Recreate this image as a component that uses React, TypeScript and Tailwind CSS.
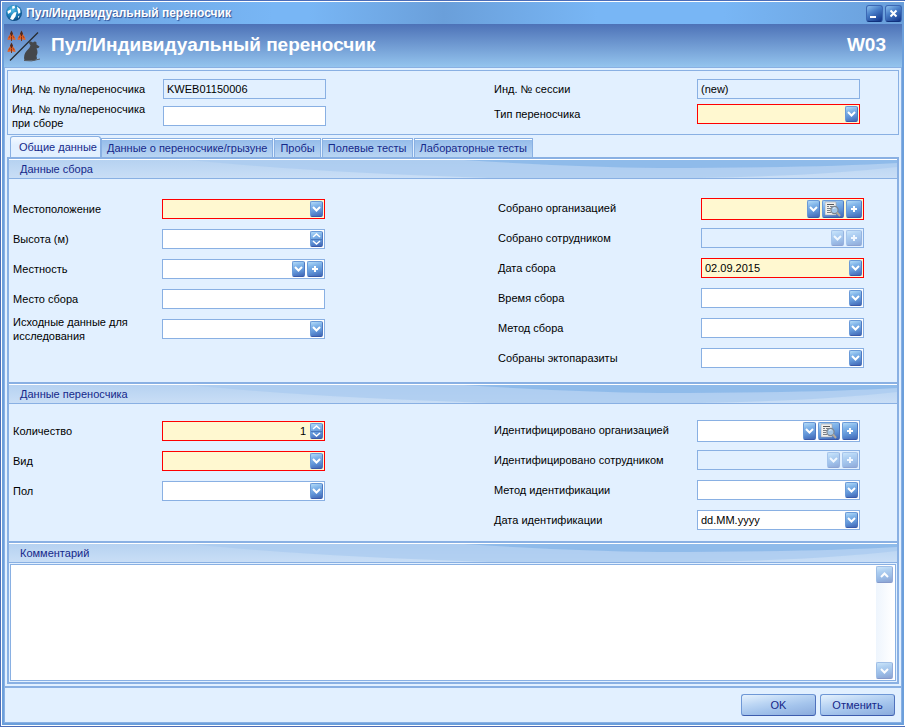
import { useId, useState, type ReactNode } from "react";
import clsx from "clsx";

const GLOSS =
  "rounded-[2px] border border-[#6a9ad8] border-b-[#3a5aa9] border-r-[#4f78c0] bg-[linear-gradient(165deg,#b4dbf8_0%,#80b4e9_30%,#5f93d7_65%,#4166b4_100%)] text-white";

function Chevron({ up = false }: { up?: boolean }) {
  return (
    <svg width="9" height="6" viewBox="0 0 9 6" fill="none" stroke="currentColor" strokeWidth="2" aria-hidden="true">
      <path d={up ? "M1 5 4.500 1.500 8 5" : "M1 1 4.500 4.500 8 1"} />
    </svg>
  );
}

function Plus() {
  return (
    <svg width="6" height="6" viewBox="0 0 6 6" fill="currentColor" aria-hidden="true">
      <path d="M2 0h2v2h2v2H4v2H2V4H0V2h2z" />
    </svg>
  );
}

function LookupIcon() {
  return (
    <svg className="shrink-0" width="16" height="16" viewBox="0 0 16 16" aria-hidden="true">
      <path d="M0 1h11v13H0z" fill="#f1f1ee" stroke="#9aa0a8" strokeWidth=".6" />
      <path d="M2 3.500h7" stroke="#55585c" strokeWidth="1" />
      <path d="M2 5.500h2M2 7.500h4M2 9.500h3M2 11.500h4M5 5.500h4" stroke="#7b7f84" strokeWidth="1" />
      <circle cx="9.500" cy="9" r="3.600" fill="#a3c6e6" stroke="#7c858f" strokeWidth="1.200" />
      <path d="M8 7.500Q9 6.500 10.500 7" stroke="#eef6fd" strokeWidth="1" fill="none" />
      <path d="M12 11.500 15 15" stroke="#b3aa9b" strokeWidth="2" />
    </svg>
  );
}

function ArrowBox() {
  return (
    <span className={clsx(GLOSS, "pointer-events-none flex w-[13px] items-center justify-center")}>
      <Chevron />
    </span>
  );
}

type FieldButtonProps = { label: string; width: string; disabled?: boolean; children: ReactNode };

function FieldButton({ label, width, disabled, children }: FieldButtonProps) {
  return (
    <button
      type="button"
      aria-label={label}
      disabled={disabled}
      className={clsx(GLOSS, width, "flex items-center justify-center disabled:opacity-50")}
    >
      {children}
    </button>
  );
}

type FieldProps = {
  label: string;
  kind?: "text" | "select" | "date" | "spin";
  value?: string;
  required?: boolean;
  disabled?: boolean;
  readOnly?: boolean;
  lookup?: boolean;
  add?: boolean;
  labelWidth: string;
};

function Field({ label, kind = "text", value = "", required, disabled, readOnly, lookup, add, labelWidth }: FieldProps) {
  const id = useId();
  const [current, setCurrent] = useState(value);
  const control = clsx(
    "h-full w-full min-w-0 flex-1 appearance-none bg-transparent px-[2px] text-[11px] text-black outline-none",
    kind === "spin" && "text-right",
  );
  return (
    <div className="flex h-full min-w-0">
      <label htmlFor={id} className={clsx(labelWidth, "flex h-5 shrink-0 items-center self-center pr-2 leading-[14px] group-data-[align=start]:self-start")}>
        {label}
      </label>
      <div
        className={clsx(
          "flex min-w-0 flex-1 gap-[2px] self-center border p-px group-data-[align=start]:self-start",
          lookup ? "h-[22px]" : "h-5",
          required ? "border-[#ff0000] bg-[#fff8d0]" : "border-[#89b0e3]",
          !required && !disabled && !readOnly && "bg-white",
        )}
      >
        {kind === "select" ? (
          <>
            <select id={id} disabled={disabled} className={control} defaultValue="">
              <option value=""></option>
            </select>
            {disabled ? <span className="flex opacity-50"><ArrowBox /></span> : <ArrowBox />}
          </>
        ) : (
          <input
            id={id}
            type="text"
            readOnly={readOnly}
            value={current}
            onChange={(e) => setCurrent(e.target.value)}
            className={control}
          />
        )}
        {kind === "date" && (
          <FieldButton label="Открыть календарь" width="w-[13px]">
            <Chevron />
          </FieldButton>
        )}
        {kind === "spin" && (
          <div className={clsx(GLOSS, "flex w-[13px] flex-col")}>
            <button type="button" aria-label="Увеличить" className="flex flex-1 items-center justify-center border-b border-[#4a78bd]">
              <svg width="9" height="5" viewBox="0 0 9 5" fill="none" stroke="currentColor" strokeWidth="1.500"><path d="M1 4 4.500 1 8 4" /></svg>
            </button>
            <button type="button" aria-label="Уменьшить" className="flex flex-1 items-center justify-center">
              <svg width="9" height="5" viewBox="0 0 9 5" fill="none" stroke="currentColor" strokeWidth="1.500"><path d="M1 1 4.500 4 8 1" /></svg>
            </button>
          </div>
        )}
        {lookup && (
          <FieldButton label="Найти" width="w-[22px]">
            <LookupIcon />
          </FieldButton>
        )}
        {add && (
          <FieldButton label="Добавить" width="w-4" disabled={disabled}>
            <Plus />
          </FieldButton>
        )}
      </div>
    </div>
  );
}

function Column({ align, className, children }: { align: "center" | "start"; className: string; children: ReactNode }) {
  return (
    <div data-align={align} className={clsx("group grid content-start", className)}>
      {children}
    </div>
  );
}

function SectionHeader({ children }: { children: ReactNode }) {
  return (
    <div className="relative h-[20px] shrink-0 border-b border-t border-b-[#89b0e3] border-t-white bg-[linear-gradient(#b6d2f1,#c9def6)]">
      <svg className="absolute inset-0 h-full w-full" viewBox="0 0 888 18" preserveAspectRatio="none" aria-hidden="true">
        <path d="M180 0Q300 12 480 18H690Q810 16 888 7V0Z" fill="#a9caef" opacity=".7" />
        <path d="M455 0Q560 7 650 8Q800 8 888 3V0Z" fill="#8ab7e9" opacity=".85" />
      </svg>
      <h2 className="relative pl-[11px] leading-[18px] text-[#15288a]">{children}</h2>
    </div>
  );
}

function GlobeIcon() {
  return (
    <svg width="18" height="18" viewBox="0 0 18 18" aria-hidden="true">
      <defs>
        <radialGradient id="globe" cx=".4" cy=".3" r=".75">
          <stop offset="0" stopColor="#56bde6" />
          <stop offset=".6" stopColor="#1878b4" />
          <stop offset="1" stopColor="#0b4077" />
        </radialGradient>
      </defs>
      <circle cx="9" cy="9" r="8" fill="url(#globe)" />
      <path d="M7 2.500 9.500 1.500 10 4 7.500 5zM12 2.500 15 5 15.500 8.500 13.500 10 12.500 6zM2.500 7 6 5.500 6 8 3 10zM9 8.500 11.500 8 10.500 12.500 8 16 5 15 6.500 11.500zM13 12.500 14.500 11.500 13.500 14.500z" fill="#fff" />
    </svg>
  );
}

function Fly({ x, y }: { x: number; y: number }) {
  return (
    <g transform={`translate(${x} ${y})`}>
      <path d="M4 2.500Q0 6 0 9.500L3 9 4 7.500 5 9 8 9.500Q8 6 4 2.500Z" fill="#e2632a" />
      <path d="M4 0 5.500 3 4.500 5.500H3.500L2.500 3Z" fill="#55281a" />
      <path d="M3.500 6h1v4.500h-1z" fill="#7c3518" />
      <path d="M1.500 7.500 2.500 5.500M6.500 7.500 5.500 5.500" stroke="#8c3a18" strokeWidth=".7" />
    </g>
  );
}

function VectorIcon() {
  return (
    <svg width="34" height="34" viewBox="0 0 34 34" aria-hidden="true">
      <Fly x={0.5} y={1.5} />
      <Fly x={10.5} y={1.5} />
      <Fly x={0.5} y={13.5} />
      <path d="M3 31.500 31 3.500" stroke="#262a30" strokeWidth="1.200" />
      <path d="M22 14Q22 12 24 12.500L26 13.500Q28 11.500 29.500 13.500L29.500 15.500L32.500 17.500Q32.500 19 29.500 19.500Q31.500 23 29.500 27L30 29.500L28 31.500H17.500Q16 26 19.500 22Q23 19 23.500 16.500Z" fill="#45474b" />
      <path d="M17 31.500Q24 33 33 30" stroke="#585c62" strokeWidth="1" fill="none" />
    </svg>
  );
}

const TABS = ["Общие данные", "Данные о переносчике/грызуне", "Пробы", "Полевые тесты", "Лабораторные тесты"];

const CAPTION_BUTTON =
  "flex h-[17px] w-[17px] items-center justify-center rounded-[3px] border border-[#3d68b4] border-b-[#10307c] bg-[linear-gradient(150deg,#8cc0ee_0%,#4a80ca_40%,#0f3287_100%)] text-white";

export default function App() {
  const [tab, setTab] = useState(0);
  return (
    <div className="flex min-h-screen flex-col border-y border-l border-[#4b6db8] font-['Liberation_Sans',Arial,sans-serif] text-[11px] text-black">
      <div className="flex flex-1 flex-col border border-white bg-[#6c9fdb]">
        <header className="flex h-[22px] items-center bg-[linear-gradient(90deg,#6a9fda_0%,#78b6f5_30%,#78b6f5_34%,#6a9fda_49%,#78b6f5_66%,#78b6f5_80%,#6a9fda_100%)] pl-[3px]">
          <GlobeIcon />
          <span className="ml-[3px] flex-1 text-[12px] font-bold text-white [text-shadow:1px_1px_1px_#2d4f96]">
            Пул/Индивидуальный переносчик
          </span>
          <div className="flex gap-[2px] pr-[2px]">
            <button type="button" aria-label="Свернуть" className={CAPTION_BUTTON}>
              <svg width="15" height="15" viewBox="0 0 15 15" aria-hidden="true"><path d="M3 10h6v2H3z" fill="currentColor" /></svg>
            </button>
            <button type="button" aria-label="Закрыть" className={CAPTION_BUTTON}>
              <svg width="15" height="15" viewBox="0 0 15 15" aria-hidden="true"><path d="M4.500 4.500 10.500 10.500M10.500 4.500 4.500 10.500" stroke="currentColor" strokeWidth="2" /></svg>
            </button>
          </div>
        </header>

        <div className="mx-[2px] mb-[2px] flex flex-1 flex-col bg-[#e2f0ff]">
          <div className="flex h-[44px] items-center justify-between border-b border-[#89b0e3] bg-[linear-gradient(#4d72b7,#94c4ee)] pl-[3px] pr-4 text-[19px] font-bold text-white">
            <div className="flex items-center gap-[10px]">
              <VectorIcon />
              <h1>Пул/Индивидуальный переносчик</h1>
            </div>
            <span>W03</span>
          </div>

          <div className="flex flex-1 flex-col border-x border-b border-[#89b0e3]">
            <div className="mx-[2px] mt-[2px] grid grid-cols-[314fr_366fr] gap-x-[168px] border border-[#89b0e3] py-2 pl-1 pr-[38px]">
              <Column align="center" className="auto-rows-[20px] gap-y-[7px]">
                <Field labelWidth="w-[151px]" label="Инд. № пула/переносчика" value="KWEB01150006" readOnly />
                <Field labelWidth="w-[151px]" label="Инд. № пула/переносчика при сборе" />
              </Column>
              <Column align="center" className="auto-rows-[20px] gap-y-[5px]">
                <Field labelWidth="w-[203px]" label="Инд. № сессии" value="(new)" readOnly />
                <Field labelWidth="w-[203px]" label="Тип переносчика" kind="select" required />
              </Column>
            </div>

            <div role="tablist" className="mx-[2px] flex h-[22px] shrink-0 items-end pl-[3px]">
              {TABS.map((name, i) => (
                <button
                  key={name}
                  type="button"
                  role="tab"
                  aria-selected={i === tab}
                  onClick={() => setTab(i)}
                  className={clsx(
                    "whitespace-nowrap border-x border-t border-[#89b0e3] text-[#15288a]",
                    i === tab
                      ? "h-[21px] rounded-t-[3px] bg-[linear-gradient(#f4f9ff,#e2f0ff_40%)] pl-2 pr-[3px]"
                      : "mr-px h-[19px] bg-[linear-gradient(#93bbea,#b9d5f3)] px-[5px] shadow-[inset_0_1px_#fff]",
                  )}
                >
                  {name}
                </button>
              ))}
            </div>

            <main className="mx-[2px] mb-[2px] flex flex-1 flex-col border-2 border-[#89b0e3]">
              <SectionHeader>Данные сбора</SectionHeader>
              <div className="grid grid-cols-[312fr_366fr] gap-x-[173px] border-b-2 border-[#89b0e3] pb-1 pl-1 pr-[33px]">
                <Column align="center" className="auto-rows-[30px] pt-[15px]">
                  <Field labelWidth="w-[149px]" label="Местоположение" kind="select" required />
                  <Field labelWidth="w-[149px]" label="Высота (м)" kind="spin" />
                  <Field labelWidth="w-[149px]" label="Местность" kind="select" add />
                  <Field labelWidth="w-[149px]" label="Место сбора" />
                  <Field labelWidth="w-[149px]" label="Исходные данные для исследования" kind="select" />
                </Column>
                <Column align="start" className="auto-rows-[30px] pt-[19px]">
                  <Field labelWidth="w-[203px]" label="Собрано организацией" kind="select" required lookup add />
                  <Field labelWidth="w-[203px]" label="Собрано сотрудником" kind="select" disabled add />
                  <Field labelWidth="w-[203px]" label="Дата сбора" kind="date" value="02.09.2015" required />
                  <Field labelWidth="w-[203px]" label="Время сбора" kind="select" />
                  <Field labelWidth="w-[203px]" label="Метод сбора" kind="select" />
                  <Field labelWidth="w-[203px]" label="Собраны эктопаразиты" kind="select" />
                </Column>
              </div>

              <SectionHeader>Данные переносчика</SectionHeader>
              <div className="grid grid-cols-[312fr_366fr] gap-x-[169px] border-b-2 border-[#89b0e3] pb-px pl-1 pr-[37px]">
                <Column align="center" className="auto-rows-[30px] pt-3">
                  <Field labelWidth="w-[149px]" label="Количество" kind="spin" value="1" required />
                  <Field labelWidth="w-[149px]" label="Вид" kind="select" required />
                  <Field labelWidth="w-[149px]" label="Пол" kind="select" />
                </Column>
                <Column align="start" className="auto-rows-[30px] pt-4">
                  <Field labelWidth="w-[203px]" label="Идентифицировано организацией" kind="select" lookup add />
                  <Field labelWidth="w-[203px]" label="Идентифицировано сотрудником" kind="select" disabled add />
                  <Field labelWidth="w-[203px]" label="Метод идентификации" kind="select" />
                  <Field labelWidth="w-[203px]" label="Дата идентификации" kind="date" value="dd.MM.yyyy" />
                </Column>
              </div>

              <SectionHeader>Комментарий</SectionHeader>
              <div className="m-px flex flex-1 border border-[#89b0e3] bg-white py-px pr-[2px]">
                <textarea aria-label="Комментарий" className="min-h-[60px] flex-1 resize-none bg-transparent px-1 outline-none" />
                <div className="flex w-[17px] flex-col justify-between bg-[linear-gradient(90deg,#eef5fd,#ffffff)]">
                  <button type="button" disabled aria-label="Прокрутить вверх" className={clsx(GLOSS, "flex h-[17px] items-center justify-center opacity-60")}>
                    <Chevron up />
                  </button>
                  <button type="button" disabled aria-label="Прокрутить вниз" className={clsx(GLOSS, "flex h-[17px] items-center justify-center opacity-60")}>
                    <Chevron />
                  </button>
                </div>
              </div>
            </main>

            <footer className="flex justify-end gap-1 border-t-2 border-[#89b0e3] pb-[6px] pr-[6px] pt-[6px]">
              {["OK", "Отменить"].map((name) => (
                <button
                  key={name}
                  type="button"
                  className="h-[22px] w-[75px] rounded-[3px] border border-[#6f98d6] border-b-[#3c5cae] border-r-[#4f72bd] bg-[linear-gradient(170deg,#e6f2fd_0%,#bcd6f4_35%,#a4c4ec_60%,#8aabdd_100%)] text-[#15288a]"
                >
                  {name}
                </button>
              ))}
            </footer>
          </div>
        </div>
      </div>
    </div>
  );
}
